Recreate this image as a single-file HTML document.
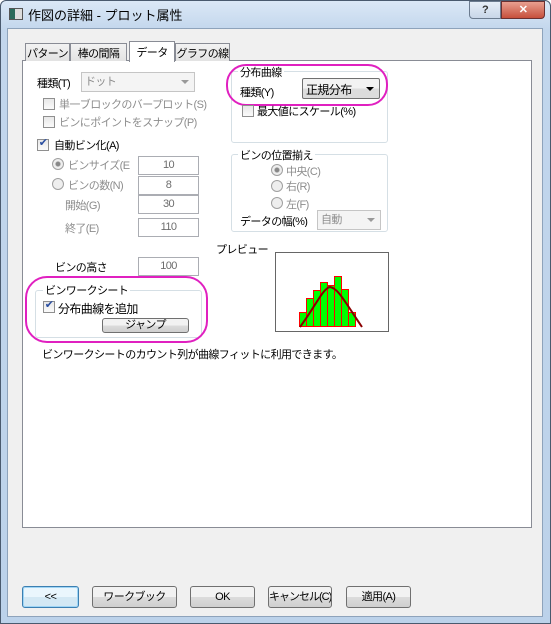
<!DOCTYPE html><html><head><meta charset="utf-8"><style>
*{box-sizing:border-box}
body{margin:0;width:551px;height:624px;overflow:hidden;font:11px "Liberation Sans","Noto Sans CJK JP",sans-serif;letter-spacing:-0.6px;color:#000;background:#fff}
.a,.tab,.btn,.gbt{position:absolute;white-space:nowrap}
.win{position:absolute;left:0;top:0;width:551px;height:624px;border:1px solid #4a5a6e;border-radius:6px 6px 0 0;background:linear-gradient(#dbe8f6,#c2d6ec 30px,#bcd2ea)}
.client{position:absolute;left:7px;top:28px;width:536px;height:589px;background:#f0f0f0;border:1px solid #8ea3bb}
.panel{position:absolute;left:22px;top:60px;width:510px;height:468px;border:1px solid #898c95;background:#fff}
.tab{top:43px;height:18px;border:1px solid #898c95;border-bottom:none;background:linear-gradient(#f2f2f2,#e3e3e3);padding:1px 0;text-align:center;overflow:hidden}
.gb{position:absolute;border:1px solid #d5dfe5;border-radius:3px}
.gbt{background:#fff;padding:0 2px}
.inp{position:absolute;border:1px solid #abadb3;background:#fff;text-align:center;color:#6d6d6d;height:19px;line-height:17px}
.dis{color:#8d8d8d}
.cb{position:absolute;width:12px;height:12px;border:1px solid #8f8f8f;background:linear-gradient(#e8e8e8,#fafafa)}
.rd{position:absolute;width:12px;height:12px;border:1px solid #a0a0a0;border-radius:50%;background:#eee}
.btn{height:22px;border:1px solid #707070;border-radius:3px;background:linear-gradient(#f2f2f2 50%,#dcdcdc 50%,#cfcfcf);text-align:center;line-height:20px;overflow:hidden}
.dd{position:absolute;border:1px solid #c5c5c5;background:#f4f4f4;height:20px;line-height:18px;padding-left:3px;color:#8d8d8d}
.arr{position:absolute;right:5px;top:7px;width:0;height:0;border:4px solid transparent;border-top:4px solid #999}
</style></head><body>
<div class="win"></div>
<div class="a" style="left:9px;top:8px;width:14px;height:12px;background:linear-gradient(90deg,#2a6a5a 40%,#ddd 40%);border:1px solid #555"></div>
<div class="a" style="left:28px;top:5px;font-size:13px;letter-spacing:0">作図の詳細 - プロット属性</div>
<div class="a" style="left:469px;top:1px;width:32px;height:18px;border:1px solid #6b7b8f;border-radius:0 0 0 4px;background:linear-gradient(#e6eef8,#c8d6e8);text-align:center;font-weight:bold;color:#333;line-height:16px">?</div>
<div class="a" style="left:501px;top:1px;width:44px;height:18px;border:1px solid #6b3030;border-radius:0 0 4px 0;background:linear-gradient(#e8a090,#c7503c);text-align:center;color:#fff;font-weight:bold;line-height:16px">✕</div>
<div class="client"></div>
<div class="panel"></div>
<div class="tab" style="left:25px;width:45px">パターン</div>
<div class="tab" style="left:70px;width:57px">棒の間隔</div>
<div class="tab" style="left:175px;width:55px">グラフの線</div>
<div class="tab" style="left:129px;top:41px;height:21px;width:46px;background:#fff;padding-top:2px">データ</div>

<div class="a" style="left:37px;top:75px">種類(T)</div>
<div class="dd" style="left:81px;top:72px;width:114px">ドット<span class="arr"></span></div>
<div class="cb" style="left:43px;top:98px"></div><div class="a dis" style="left:59px;top:96px">単一ブロックのバープロット(S)</div>
<div class="cb" style="left:43px;top:116px"></div><div class="a dis" style="left:59px;top:114px">ビンにポイントをスナップ(P)</div>
<div class="cb" style="left:37px;top:139px"></div><div class="a" style="left:37px;top:136px;font-size:11px;color:#2a4ea0;width:12px;text-align:center">✔</div><div class="a" style="left:54px;top:137px">自動ビン化(A)</div>
<div class="rd" style="left:52px;top:158px;background:radial-gradient(#888 2px,#eee 3px)"></div><div class="a dis" style="left:68px;top:157px;width:68px;overflow:hidden">ビンサイズ(E</div>
<div class="inp" style="left:138px;top:156px;width:61px">10</div>
<div class="rd" style="left:52px;top:178px"></div><div class="a dis" style="left:68px;top:177px">ビンの数(N)</div>
<div class="inp" style="left:138px;top:176px;width:61px">8</div>
<div class="a dis" style="left:65px;top:197px">開始(G)</div><div class="inp" style="left:138px;top:195px;width:61px">30</div>
<div class="a dis" style="left:65px;top:220px">終了(E)</div><div class="inp" style="left:138px;top:218px;width:61px">110</div>
<div class="a" style="left:55px;top:259px">ビンの高さ</div><div class="inp" style="left:138px;top:257px;width:61px">100</div>

<div class="gb" style="left:35px;top:290px;width:167px;height:48px"></div>
<div class="gbt" style="left:43px;top:282px">ビンワークシート</div>
<div class="cb" style="left:43px;top:301px"></div><div class="a" style="left:43px;top:298px;font-size:11px;color:#2a4ea0;width:12px;text-align:center">✔</div><div class="a" style="left:58px;top:300px;font-size:12px">分布曲線を追加</div>
<div class="btn" style="left:102px;top:318px;width:87px;height:15px;line-height:13px">ジャンプ</div>
<div class="a" style="left:25px;top:276px;width:183px;height:67px;border:2px solid #e020c0;border-radius:22px"></div>
<div class="a" style="left:42px;top:346px">ビンワークシートのカウント列が曲線フィットに利用できます。</div>

<div class="gb" style="left:231px;top:71px;width:157px;height:72px"></div>
<div class="gbt" style="left:238px;top:64px">分布曲線</div>
<div class="a" style="left:240px;top:84px">種類(Y)</div>
<div class="a" style="left:302px;top:78px;width:78px;height:21px;border:1px solid #707070;border-radius:2px;background:linear-gradient(#f2f2f2 50%,#dcdcdc 50%);padding:2px 3px;font-size:12px">正規分布<span class="arr" style="border-top-color:#000;top:8px"></span></div>
<div class="a" style="left:226px;top:64px;width:162px;height:42px;border:2px solid #e020c0;border-radius:20px"></div>
<div class="cb" style="left:242px;top:105px"></div><div class="a" style="left:257px;top:103px">最大値にスケール(%)</div>

<div class="gb" style="left:231px;top:154px;width:157px;height:78px"></div>
<div class="gbt" style="left:238px;top:147px">ビンの位置揃え</div>
<div class="rd" style="left:271px;top:164px;background:radial-gradient(#888 2px,#eee 3px)"></div><div class="a dis" style="left:286px;top:163px">中央(C)</div>
<div class="rd" style="left:271px;top:180px"></div><div class="a dis" style="left:286px;top:178px">右(R)</div>
<div class="rd" style="left:271px;top:197px"></div><div class="a dis" style="left:286px;top:196px">左(F)</div>
<div class="a" style="left:240px;top:213px;height:14px;width:75px;overflow:hidden">データの幅(%)</div>
<div class="dd" style="left:317px;top:210px;width:64px">自動<span class="arr"></span></div>

<div class="a" style="left:216px;top:241px">プレビュー</div>
<div class="a" style="left:275px;top:252px;width:114px;height:80px;border:1px solid #666;background:#fff"></div>
<svg class="a" style="left:275px;top:252px" width="114" height="80">
<g fill="#00ff00" stroke="#f00" stroke-width="1">
<rect x="24.5" y="60.5" width="7" height="14"/><rect x="31.5" y="46.5" width="7" height="28"/><rect x="38.5" y="38.5" width="7" height="36"/><rect x="45.5" y="30.5" width="7" height="44"/><rect x="52.5" y="33.5" width="7" height="41"/><rect x="59.5" y="24.5" width="7" height="50"/><rect x="66.5" y="37.5" width="7" height="37"/><rect x="73.5" y="60.5" width="7" height="14"/></g>
<path d="M25 75 C40 55 48 36 55 35 C63 36 70 50 87 75" fill="none" stroke="#8b0000" stroke-width="2"/>
</svg>

<div class="btn" style="left:22px;top:586px;width:57px;border-color:#3c7fb1;box-shadow:0 0 0 1px #9fd5f5 inset;background:linear-gradient(#eaf6fd 50%,#d3e8f4 50%)">&lt;&lt;</div>
<div class="btn" style="left:92px;top:586px;width:85px">ワークブック</div>
<div class="btn" style="left:190px;top:586px;width:65px">OK</div>
<div class="btn" style="left:268px;top:586px;width:64px;letter-spacing:-1px">キャンセル(C)</div>
<div class="btn" style="left:346px;top:586px;width:65px">適用(A)</div>
</body></html>
